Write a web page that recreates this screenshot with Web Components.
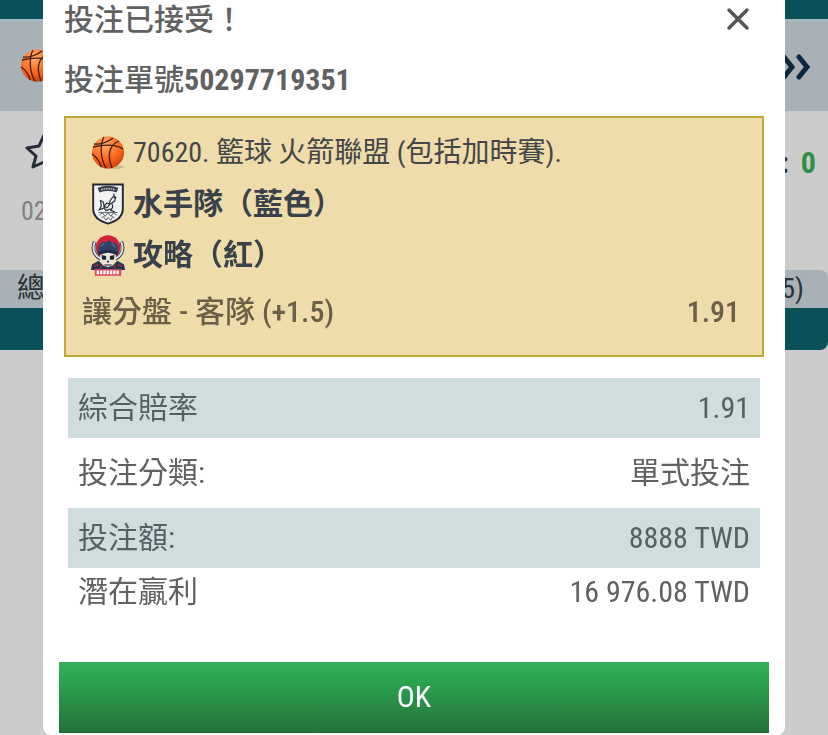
<!DOCTYPE html>
<html lang="zh-Hant">
<head>
<meta charset="utf-8">
<meta name="viewport" content="width=device-width, initial-scale=1">
<title>投注已接受</title>
<style>
  body {
    margin: 0;
    background: #ccc;
    color: #616161;
    font-family: "Roboto Condensed", Roboto, "Noto Sans CJK TC", sans-serif;
    font-size: 30px;
    line-height: 40px;
  }
</style>
</head>
<body>

<event-list>
  <span slot="date">02</span>
  <span slot="label">:</span>
  <span slot="score">0</span>
  <span slot="market">總</span>
  <span slot="line">5)</span>
</event-list>

<bet-dialog heading="投注已接受！">
  <bet-ticket number="50297719351" odds="1.91">
    <ticket-line icon="ball">70620. 籃球 火箭聯盟 (包括加時賽).</ticket-line>
    <ticket-line icon="shield" strong>水手隊（藍色）</ticket-line>
    <ticket-line icon="raiders" strong>攻略（紅）</ticket-line>
    <span slot="pick">讓分盤 - 客隊 (+1.5)</span>
  </bet-ticket>
  <bet-summary></bet-summary>
</bet-dialog>

<script>
const icons = {
  ball: `
    <svg viewBox="0 0 34 34" aria-hidden="true">
      <defs>
        <radialGradient id="g" cx="0.4" cy="0.25" r="0.8">
          <stop offset="0" stop-color="#ffb478"/>
          <stop offset="0.3" stop-color="#fd8a3e"/>
          <stop offset="0.7" stop-color="#f75c14"/>
          <stop offset="1" stop-color="#c23a08"/>
        </radialGradient>
      </defs>
      <ellipse cx="21" cy="31" rx="12" ry="2" fill="#8a6a3a" opacity="0.3"/>
      <circle cx="17" cy="16.500" r="16" fill="url(#g)"/>
      <g fill="none" stroke="#4a1c0c" stroke-width="1.300">
        <path d="M2 11c9-2 22-3 30 2"/>
        <path d="M3 8C9 9 17 6 22 2"/>
        <path d="M13 1C9 8 9 22 15 32"/>
        <path d="M28 5c-8 3-13 12-7 27"/>
        <path d="M1 18c3 2 8 7 9 13"/>
      </g>
    </svg>`,
  shield: `
    <svg viewBox="0 0 34 44" aria-hidden="true">
      <path d="M1.500 1.500h31V27c0 8-6 13-15.500 15.500C7.500 40 1.500 35 1.500 27z" fill="#f3f3f3" stroke="#22262f" stroke-width="2"/>
      <path d="M6 5q11-4 22 0l-2 5q-9-3-18 0z" fill="#3d4350"/>
      <path d="M10 7q7-2 14 0" fill="none" stroke="#d4d4d4" stroke-width="1.500" stroke-dasharray="1.500 1"/>
      <path d="M9 18l3 2 1 4 3-3 2 1 2-5 3-3 2 1-1 4-3 2 1 4-2 4 4 1M9 18l1 6-2 4 5-2 2 3 5-2M12 24l4 2 4-5M23 11l1 5" fill="none" stroke="#2c313b" stroke-width="1.300"/>
      <path d="M7 31h20M8 34l3-3 3 4 3-4 3 4 3-4 3 3M10 37l2-2 3 4 2-3 3 3 2-4 2 2" fill="none" stroke="#555b66" stroke-width="1"/>
    </svg>`,
  raiders: `
    <svg viewBox="0 0 36 44" aria-hidden="true">
      <circle cx="18" cy="14" r="13" fill="#d3233a"/>
      <path d="M4 8C1 15 3 22 10 26M32 8c3 7 1 14-6 18" fill="none" stroke="#2b3850" stroke-width="4"/>
      <path d="M4 8C1 15 3 22 10 26M32 8c3 7 1 14-6 18" fill="none" stroke="#e6e1df" stroke-width="2"/>
      <path d="M0 38l1-6 7-4 5 5h10l5-5 7 4 1 6z" fill="#24344e"/>
      <path d="M3 34l5-2M28 32l5 2M10 36l2-3M24 33l2 3" stroke="#b02a3e" stroke-width="1.500"/>
      <path d="M7 20c0-6 2-9 5-12 3 1 5 0 8-2 1 3 3 3 6 3 3 4 3 7 3 11z" fill="#2f4263"/>
      <path d="M10 13l4-3M22 10l4 4" stroke="#4e6486" stroke-width="2"/>
      <path d="M10 20q8-4 16 0l1 6-4 3-1 5h-2l-2 1-2-1h-2l-1-5-4-3z" fill="#eee4dc"/>
      <path d="M11 22l5 1v4h-4zM25 22l-5 1v4h4zM17 28h2v2h-2zM14 32h8v1h-8z" fill="#1c2433"/>
      <path d="M8 21c6-4 14-4 20 0" fill="none" stroke="#1f2c45" stroke-width="3"/>
      <path d="M4 37h28v7H4z" fill="#e04a58"/>
      <path d="M6 40.500h24" stroke="#fff" stroke-width="4" stroke-dasharray="2.500 1"/>
    </svg>`,
};

class EventList extends HTMLElement {
  constructor() {
    super();
    this.attachShadow({ mode: 'open' });
    this.shadowRoot.innerHTML = `
      <style>
        :host {
          display: block;
          overflow: hidden;
          color: #2a3238;
        }
        .bar { height: 19px; background: #095059; }
        .row {
          display: flex;
          justify-content: space-between;
          align-items: center;
          box-sizing: border-box;
        }
        .sport {
          height: 92px;
          padding: 0 17px 0 20px;
          border-top: 2px solid #a3bcc3;
          background: #a8b1b6;
        }
        .sport svg { display: block; width: 34px; height: 34px; }
        .sport .more { width: 32px; height: 28px; }
        .event {
          height: 159px;
          padding: 22px 12px 0 21px;
          align-items: flex-start;
        }
        .event svg { display: block; width: 40px; height: 38px; }
        .date { display: block; margin-top: 20px; font-size: 26px; color: #7f8082; }
        .score { display: flex; gap: 12px; margin-top: 10px; font-weight: 700; }
        ::slotted([slot="score"]) { color: #2f8f49; }
        .market {
          height: 38px;
          padding: 0 24px 0 17px;
          border-radius: 0 8px 0 0;
          background: #a8b1b6;
          font-size: 28px;
        }
        .foot { height: 42px; border-radius: 0 0 8px 0; background: #095059; }
      </style>
      <div class="bar"></div>
      <div class="row sport">
        ${icons.ball}
        <svg class="more" viewBox="0 0 32 28" fill="none" stroke="#0c2740" stroke-width="5" stroke-linecap="round">
          <path d="M5 5l8 10-8 10M20 5l8 10-8 10"/>
        </svg>
      </div>
      <div class="row event">
        <div>
          <svg viewBox="0 0 40 38" fill="none" stroke="#252b38" stroke-width="3" stroke-linejoin="round">
            <path d="M23 2l-5 11-12 2 9 8-3 11 11-5 11 5-3-11 8-8-11-2z"/>
          </svg>
          <span class="date"><slot name="date"></slot></span>
        </div>
        <div class="score"><slot name="label"></slot><slot name="score"></slot></div>
      </div>
      <div class="row market">
        <slot name="market"></slot>
        <slot name="line"></slot>
      </div>
      <div class="foot"></div>
    `;
  }
}

class BetDialog extends HTMLElement {
  constructor() {
    super();
    this.attachShadow({ mode: 'open' });
  }

  connectedCallback() {
    this.shadowRoot.innerHTML = `
      <style>
        :host {
          position: fixed;
          inset: 0;
          display: flex;
          padding: 0 43px;
          overflow: auto;
        }
        section {
          flex: 1;
          display: flex;
          flex-direction: column;
          box-sizing: border-box;
          min-height: 100%;
          padding: 0 16px 2px;
          border-radius: 0 0 8px 8px;
          background: #fff;
        }
        header {
          display: flex;
          justify-content: space-between;
          align-items: center;
          height: 40px;
          padding: 0 16px 0 5px;
        }
        h1 {
          margin: 0;
          font-family: "Roboto Condensed", "Noto Sans CJK TC Medium", "Noto Sans CJK TC", sans-serif;
          font-size: 30px;
          font-weight: 500;
        }
        .close {
          padding: 0;
          border: 0;
          background: none;
          cursor: pointer;
        }
        .close svg { display: block; width: 30px; height: 30px; }
        .content { flex: 1; }
        .ok {
          height: 71px;
          padding: 0 0 2px;
          border: 0;
          background: linear-gradient(#36b05a, #2cab52 15%, #24713a);
          color: #fff;
          font: inherit;
          cursor: pointer;
        }
      </style>
      <section role="dialog" aria-labelledby="title">
        <header>
          <h1 id="title">${this.getAttribute('heading')}</h1>
          <button class="close" type="button" aria-label="關閉">
            <svg viewBox="0 0 30 30" fill="none" stroke="#555" stroke-width="3.500" stroke-linecap="round">
              <path d="M6 5l18 18M24 5L6 23"/>
            </svg>
          </button>
        </header>
        <div class="content"><slot></slot></div>
        <button class="ok" type="button">OK</button>
      </section>
    `;
    this.shadowRoot.querySelectorAll('button').forEach((button) => {
      button.addEventListener('click', () => this.remove());
    });
  }
}

class BetTicket extends HTMLElement {
  constructor() {
    super();
    this.attachShadow({ mode: 'open' });
  }

  connectedCallback() {
    this.shadowRoot.innerHTML = `
      <style>
        :host { display: block; padding: 20px 5px 0; }
        h2, .pick {
          font-family: "Roboto Condensed", "Noto Sans CJK TC Medium", "Noto Sans CJK TC", sans-serif;
          font-weight: 500;
        }
        h2 { margin: 0 0 16px; font-size: 30px; }
        .number { font-weight: 700; }
        .card {
          padding: 9px 22px 12px 16px;
          border: 2px solid #bfa93a;
          background: #eedcaa;
        }
        .pick {
          display: flex;
          justify-content: space-between;
          align-items: center;
          height: 63px;
          color: #6a6046;
        }
      </style>
      <h2>投注單號<span class="number">${this.getAttribute('number')}</span></h2>
      <div class="card">
        <slot></slot>
        <div class="pick">
          <slot name="pick"></slot>
          <span>${this.getAttribute('odds')}</span>
        </div>
      </div>
    `;
  }
}

class TicketLine extends HTMLElement {
  constructor() {
    super();
    this.attachShadow({ mode: 'open' });
  }

  connectedCallback() {
    this.shadowRoot.innerHTML = `
      <style>
        :host {
          display: flex;
          align-items: center;
          gap: 8px;
          height: 51px;
          padding-left: 9px;
          color: #444648;
          font-size: 28px;
        }
        :host([strong]) { color: #3a414a; font-size: 30px; font-weight: 700; }
        svg { width: 34px; height: 42px; }
      </style>
      ${icons[this.getAttribute('icon')]}
      <span><slot></slot></span>
    `;
  }
}

class BetSummary extends HTMLElement {
  constructor() {
    super();
    this.attachShadow({ mode: 'open' });

    this.rows = [
      ['綜合賠率', '1.91'],
      ['投注分類:', '單式投注'],
      ['投注額:', '8888 TWD'],
      ['潛在贏利', '16 976.08 TWD'],
    ];

    const rowsHTML = this.rows.map(([label, value]) => `
      <tr><th scope="row">${label}</th><td>${value}</td></tr>
    `).join('');

    this.shadowRoot.innerHTML = `
      <style>
        :host { display: block; padding: 21px 9px 0; }
        table { width: 100%; border-collapse: collapse; }
        th, td { height: 60px; padding: 0 10px; font-weight: 400; }
        th { text-align: left; }
        td { text-align: right; }
        tr:nth-child(odd) { background: #d0dddf; color: #536163; }
        tr:nth-child(2) > * { height: 70px; }
        tr:last-child > * { height: 48px; }
      </style>
      <table>${rowsHTML}</table>
    `;
  }
}

customElements.define('event-list', EventList);
customElements.define('bet-dialog', BetDialog);
customElements.define('bet-ticket', BetTicket);
customElements.define('ticket-line', TicketLine);
customElements.define('bet-summary', BetSummary);
</script>
</body>
</html>
